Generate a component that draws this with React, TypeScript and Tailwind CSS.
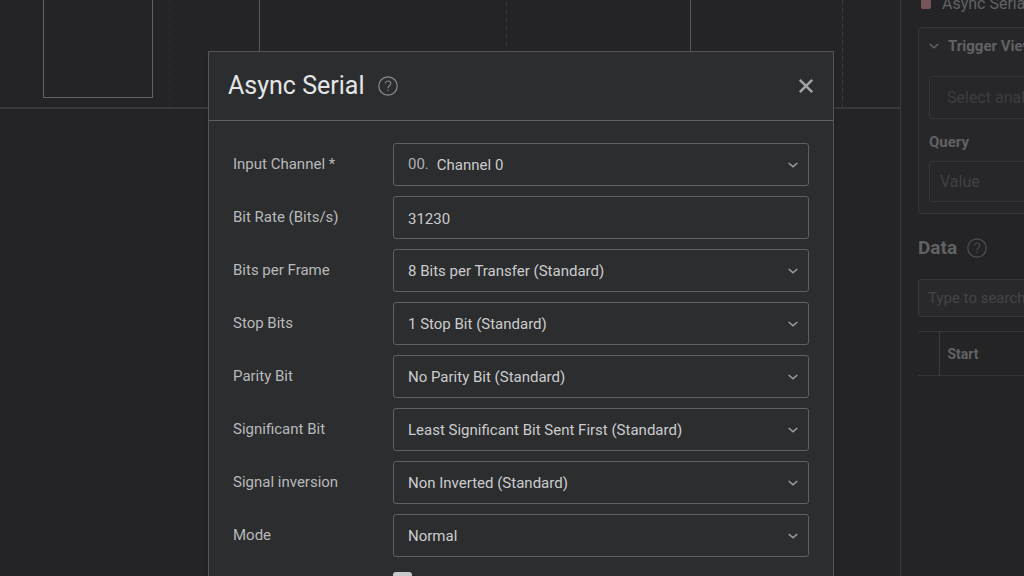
import { useId } from "react";
import type { ReactNode } from "react";

function HelpIcon() {
  return (
    <svg width="20" height="20" viewBox="0 0 20 20" fill="none" stroke="currentColor" aria-hidden="true">
      <circle cx="10" cy="10" r="9.2" strokeWidth="1.2" />
      <path d="M7.2 7.6a2.8 2.6 0 1 1 4.3 2.2c-.9.6-1.5 1.1-1.5 2.4" strokeWidth="1.1" />
      <path d="M10 13.7v1.4" strokeWidth="1.2" />
    </svg>
  );
}

function Chevron() {
  return (
    <svg width="10" height="8" viewBox="0 0 10 8" fill="none" stroke="currentColor" strokeWidth="1.6" aria-hidden="true">
      <path d="M.7 2 5 5.8 9.3 2" />
    </svg>
  );
}

type Field = { label: string; value: string; prefix?: string; kind?: "text" };

const fields: Field[] = [
  { label: "Input Channel *", value: "Channel 0", prefix: "00." },
  { label: "Bit Rate (Bits/s)", value: "31230", kind: "text" },
  { label: "Bits per Frame", value: "8 Bits per Transfer (Standard)" },
  { label: "Stop Bits", value: "1 Stop Bit (Standard)" },
  { label: "Parity Bit", value: "No Parity Bit (Standard)" },
  { label: "Significant Bit", value: "Least Significant Bit Sent First (Standard)" },
  { label: "Signal inversion", value: "Non Inverted (Standard)" },
  { label: "Mode", value: "Normal" },
];

function FieldRow({ label, value, prefix, kind }: Field) {
  const id = useId();
  return (
    <div className="flex items-center">
      <label htmlFor={id} className="w-40 shrink-0 pb-0.5 text-[15px] leading-5 text-[#b8b9ba]">
        {label}
      </label>
      <div className="flex h-[43px] flex-1 items-center gap-2 rounded-[3px] border border-[#5e6062] pr-[10px] pl-[14px] text-[15px] text-[#cbcccd]">
        {prefix && <span className="text-[#b0b1b2]">{prefix}</span>}
        {kind === "text" ? (
          <input id={id} type="text" defaultValue={value} className="h-full w-full bg-transparent pt-0.5 outline-none" />
        ) : (
          <>
            <select id={id} className="h-full min-w-0 flex-1 appearance-none bg-transparent pt-0.5 outline-none">
              <option>{value}</option>
            </select>
            <span className="text-[#9c9d9e]">
              <Chevron />
            </span>
          </>
        )}
      </div>
    </div>
  );
}

function Waveform() {
  return (
    <svg className="h-[107px] w-full" fill="none" shapeRendering="crispEdges" aria-hidden="true">
      <g strokeDasharray="5 3">
        <path d="M169.5 0V107" stroke="#2c2c2e" />
        <path d="M506.5 2V107" stroke="#363638" />
        <path d="M842.5 0V107" stroke="#3c3c3e" />
      </g>
      <path d="M43.5 0V97.5H152.5V0" stroke="#626264" />
      <path d="M259.5 0V97.5H690.5V0" stroke="#58585a" />
    </svg>
  );
}

function Panel({ children }: { children: ReactNode }) {
  return <section className="rounded-[3px] border border-[#363638] bg-[#272729] px-[10px] pb-[11px]">{children}</section>;
}

function Sidebar() {
  return (
    <aside className="w-[124px] shrink-0 overflow-hidden border-l border-[#3a3a3c]">
      <div className="w-[320px] pl-[17px] text-[#606264]">
        <div className="flex h-[27px] items-start gap-[11px] pl-[3px]">
          <span className="h-[9px] w-[10px] rounded-b-[2px] bg-[#75555a]" />
          <span className="-mt-1.5 text-base leading-5">Async Serial</span>
        </div>
        <Panel>
          <h3 className="flex h-9 items-center gap-[9px] text-[15px] font-bold">
            <Chevron />
            Trigger View
          </h3>
          <input
            type="text"
            aria-label="Analyzer"
            placeholder="Select analyzer"
            className="mt-3 block h-[43px] w-full rounded-[3px] border border-[#353537] bg-transparent px-[17px] text-base outline-none placeholder:text-[#3c3d3f]"
          />
          <label htmlFor="query" className="mt-[13px] block text-[15px] leading-5 font-bold">
            Query
          </label>
          <input
            id="query"
            type="text"
            placeholder="Value"
            className="mt-[9px] block h-[41px] w-full rounded-[3px] border border-[#353537] bg-transparent px-[10px] text-base outline-none placeholder:text-[#404143]"
          />
        </Panel>
        <h2 className="mt-5 flex h-7 items-center gap-[10px] text-[19px] font-bold">
          Data
          <span className="text-[#4c4e50]">
            <HelpIcon />
          </span>
        </h2>
        <input
          type="search"
          aria-label="Search data"
          placeholder="Type to search"
          className="mt-[17px] block h-[38px] w-full rounded-[3px] border border-[#39393b] bg-[#29292b] px-[9px] text-[15px] outline-none placeholder:text-[#434547]"
        />
        <table className="mt-[14px] h-[45px] w-full border-collapse border-y border-[#353537] text-left text-sm">
          <thead>
            <tr>
              <th className="w-[21px] border-r border-[#3b3b3d]" />
              <th className="pl-2 font-bold">Start</th>
            </tr>
          </thead>
        </table>
      </div>
    </aside>
  );
}

function SettingsDialog() {
  return (
    <div
      role="dialog"
      aria-labelledby="dialog-title"
      className="w-[626px] border border-[#545557] bg-[#2c2d2f] shadow-md"
    >
      <header className="flex h-[69px] items-center border-b border-[#5e6062] px-[19px]">
        <h1 id="dialog-title" className="text-[25px] leading-8 text-[#e4e5e6]">
          Async Serial
        </h1>
        <button type="button" aria-label="Help" className="ml-[14px] text-[#88898b]">
          <HelpIcon />
        </button>
        <button type="button" aria-label="Close" className="ml-auto text-[#a3a4a6]">
          <svg width="16" height="16" viewBox="0 0 16 16" fill="none" stroke="currentColor" strokeWidth="2.5" aria-hidden="true">
            <path d="m1.8 1.8 12.4 12.4M14.2 1.8 1.8 14.2" />
          </svg>
        </button>
      </header>
      <form className="flex flex-col gap-[10px] pt-[22px] pr-6 pb-6 pl-6">
        {fields.map((field) => (
          <FieldRow key={field.label} {...field} />
        ))}
        <div className="mt-[5px] pl-40">
          <input
            type="checkbox"
            aria-label="Show in protocol results table"
            className="block size-[19px] appearance-none rounded-[3px] bg-[#c8c9ca]"
          />
        </div>
      </form>
    </div>
  );
}

export default function App() {
  return (
    <div className="relative h-screen overflow-hidden bg-[#242426] font-['Roboto',sans-serif]">
      <div className="flex h-full">
        <main className="min-w-0 flex-1">
          <div className="border-b-2 border-[#38383a]">
            <Waveform />
          </div>
        </main>
        <Sidebar />
      </div>
      <div className="absolute inset-0 flex items-start justify-center pt-[51px] pl-[18px]">
        <SettingsDialog />
      </div>
    </div>
  );
}
